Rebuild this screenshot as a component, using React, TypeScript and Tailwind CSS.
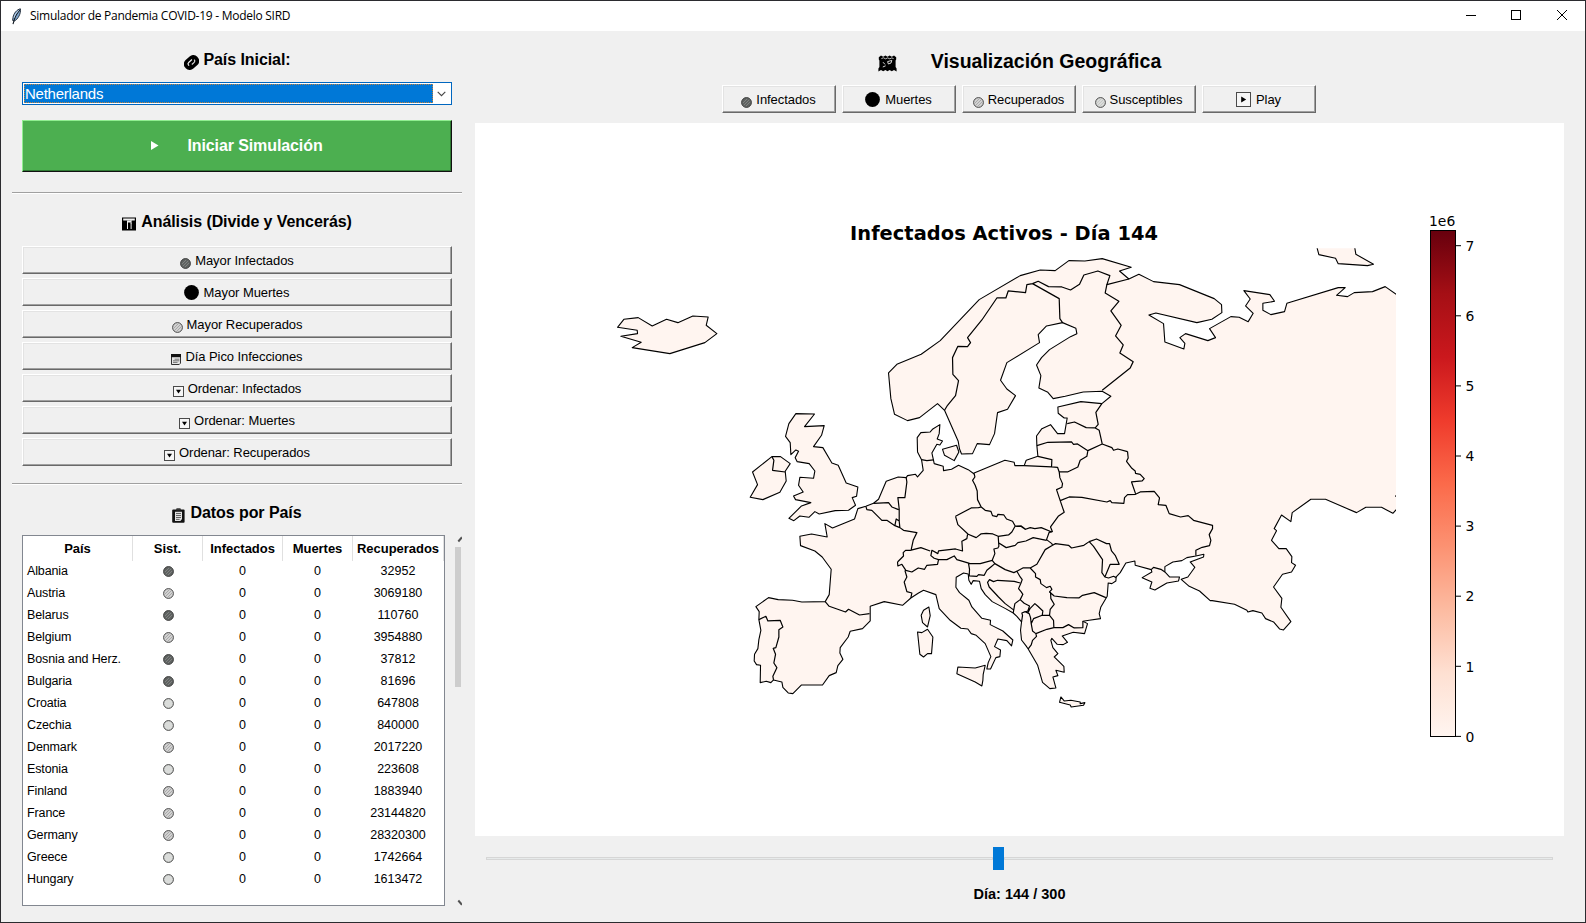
import React from "react";

type Pt = [number, number];

/* Survey sheets: each one stores points in thirds of a pixel from its own origin. */
const sheet = (ox: number, oy: number) => (s: string): Pt[] =>
  s.trim().split(/\s+/).map((p) => {
    const [x, y] = p.split(",").map(Number);
    return [ox + x / 3, oy + y / 3];
  });
const N = sheet(860, 230);
const E = sheet(1110, 230);
const W = sheet(730, 400);
const S = sheet(1000, 440);
const R = sheet(1120, 470);
const M = sheet(870, 540);
const I = sheet(600, 220);

const toPath = (pts: Pt[], close = false) =>
  "M" + pts.map((p) => p[0].toFixed(2) + " " + p[1].toFixed(2)).join("L") + (close ? "Z" : "");

const mainland: Pt[] = [
  ...N("253,540 232,520 178,562 142,571 103,552 92,505 85,428 110,402 183,372 240,331 357,208 480,136 540,119 585,121 626,91 674,92 726,85 813,111 778,122 806,146"),
  ...E("86,132 130,154 208,163 312,205 334,223 335,247 305,267 260,277 137,248 116,254 160,280 164,335 221,356 224,339 209,322 226,310 293,331 316,322 298,295 362,259 387,261 414,274 429,249 406,227 420,206 401,181 479,193 493,213 458,219 458,240 482,253 523,244 530,219 684,172 705,172 679,195 712,199 732,187 787,184 825,169 858,192 880,208"),
  ...R("850,90 828,118 818,129 784,111 737,111 709,127 616,87 572,87 516,127 512,154 484,134 462,175 469,181 454,210 476,235 498,235 515,259 514,277 526,285 514,305 487,312 460,350 485,384 482,411 512,454 490,479 478,476 460,455 436,445 425,428 398,421 383,425 380,420 343,402 276,391 270,391 238,362 207,348 183,327 203,320 224,291 210,275 250,260 251,252 227,257 200,262 185,271 158,275 134,289 134,305 148,320 178,320 175,332 140,338 104,359 89,354 95,335 66,322 95,305 93,298"),
  ...S("405,375 404,362 377,368 360,397 348,410 347,422 335,430 324,428 321,468 302,500 297,520 301,535 267,540 248,543 262,550 253,580 219,576 186,587 202,606 189,613 171,612 155,594 152,600 158,622 173,640 162,650 191,678 192,696 167,690 173,706 158,710 167,743 149,745 127,726 112,674 84,626 77,616 64,599 61,570 64,545 50,528 39,518"),
  ...M("406,205 366,184 345,163 333,145 328,123 309,121 303,132 296,120 294,101 280,98 258,111 257,141 268,157 296,180 305,200 335,234 361,240 360,253 398,272 428,299 424,317 410,301 383,296 373,319 391,329 389,349 377,352 361,386 350,386 354,367 362,349 345,310 318,285 303,280 293,266 272,264 240,240 207,205 197,163 160,150 145,158 122,173"),
  ...W("517,615 462,604 420,618 420,662 397,685 360,693 354,710 330,742 329,758 338,777 323,796 318,817 297,826 277,854 214,854 188,880 174,878 158,861 155,845 130,839 122,847 108,843 90,847 91,795 79,793 72,782 73,762 83,745 86,718 92,690 86,658 87,634 77,619 115,592 144,598 187,600 215,605 285,604 297,583 303,507 276,470 254,452 211,436 209,408 244,401 291,410 284,370 307,383 373,356 383,325 407,318 430,309 445,297 468,243 504,230 528,232 532,226 556,222 562,230 579,210 574,178 562,155 561,112 572,97 600,95 608,86 629,73 627,100 621,116 637,122 629,134 620,132 605,158 610,180 612,190 639,198 640,211 664,207 685,195 714,208 732,221"),
  ...N("340,729 434,690 462,696 464,706 492,706 498,690 533,678 530,646 529,617 545,595 571,583 592,610 613,610 621,563 612,563 594,549 593,530 662,514 725,520 752,498 726,483 669,485 615,498 579,505 563,486 536,473 542,436 529,404 544,382 568,358 631,319 650,310 647,294 607,277 559,287 534,313 538,337 440,397 421,450 440,476 466,496 442,537 412,547 403,610 388,643 351,640 337,670 304,671 298,656 294,633"),
];

const islands: Pt[][] = [
  N("247,657 289,645 296,665 282,691 253,675"),
  W("125,169 67,215 82,253 60,291 98,298 149,276 168,242 165,213 180,190 151,169"),
  W("197,40 253,41 223,79 282,76 274,105 250,139 278,142 305,188 324,195 348,248 383,260 379,288 366,292 376,315 355,330 315,331 267,341 254,334 236,351 209,347 191,361 176,354 214,317 242,307 196,298 190,287 219,275 205,255 209,231 250,234 254,212 237,190 201,184 195,172 205,153 197,149 182,163 180,127 166,108 176,70"),
  W("596,620 600,646 592,680 577,667 573,645 580,630"),
  W("562,695 575,697 592,687 608,710 604,760 592,760 580,770 569,762"),
  W("683,800 735,803 765,795 759,822 758,840 755,857 735,845 680,820"),
  S("182,770 192,782 212,780 240,785 240,790 254,787 250,795 213,800 210,794 178,786"),
  I("52,321 71,297 114,292 156,317 199,297 233,307 278,287 324,290 318,315 350,340 314,367 209,400 96,382 123,366 62,348 112,340 111,330"),
  E("620,30 621,54 626,73 676,84 684,100 772,106 790,102 737,72 734,54 733,30"),
];

const borders: Pt[][] = [
  N("253,540 262,525 286,496 295,451 278,432 277,382 293,348 322,349 331,337 322,322 365,269 410,203 437,203 444,182 496,187 500,163 517,160 534,153 565,169 605,170 631,179 658,162 671,134 713,122 749,136 740,163 806,146"),
  N("517,160 597,205 599,265 607,277"),
  N("740,163 735,188 776,213 752,242 783,285 766,317 789,344 779,368 819,394 810,413 726,480"),
  N("725,520 707,546 714,582 705,593"),
  N("621,580 643,575 678,592 705,593 717,600 726,641"),
  N("530,646 563,636 634,635 640,642 652,641 683,661 726,641"),
  N("683,661 680,678 660,690 653,710 622,725 597,725 592,711 574,710"),
  N("533,678 575,688 574,710 492,706"),
  N("726,641 755,652 760,660 773,656 802,664"),
  S("382,34 384,53 379,63 395,84 405,92 406,99 420,102 432,115 426,122 394,125 406,160"),
  S("180,181 207,170 245,171 320,185 330,181 335,187 371,189 373,172 382,163 406,162 420,155 462,153 478,173 474,193 497,195 507,220 541,230 564,226 580,240 637,255 637,265 627,283 632,300 628,316 606,321 587,330 587,346"),
  S("177,95 179,112 187,130 185,141 169,148 180,181 192,216 174,228 151,260 157,275"),
  S("47,258 63,257 76,267 90,262 104,265 123,262 155,275 147,276 139,298 155,310 157,315"),
  S("-4,308 18,322 45,315 53,307 77,302 99,292 139,300"),
  S("157,315 166,310 205,315 214,323 251,315 267,304 289,296 319,310 328,310 334,332 345,345 357,372 330,372 314,410 325,413 340,408 348,412"),
  S("267,304 280,318 307,358 305,397 314,410"),
  S("157,315 135,328 110,372 90,383 68,383 50,393"),
  S("90,383 106,400 106,410 120,418 122,430 139,442 150,438 155,447 148,455 162,467 200,472 236,473 247,465 282,457 317,472"),
  S("151,455 152,475 162,492 150,507 148,525 160,540 161,562 188,562 205,553 222,563 248,562 248,543"),
  S("161,562 140,567 107,580 109,588 97,600 93,614 84,626"),
  S("148,525 126,525 100,535 93,550 97,572 107,580"),
  S("64,545 67,525 65,518 75,514 87,520 91,532 93,550"),
  S("84,516 90,504 104,490 113,498 128,512 126,525"),
  S("39,518 44,490 60,478 72,489 88,497 83,512 75,515"),
  S("60,478 68,462 63,455 55,445 62,429 66,418 60,410 50,393"),
  M("450,128 432,123 382,120 370,124 358,118 352,126 357,140 385,170 405,190 429,208"),
  M("295,70 298,87 297,107 320,108 325,103 342,105 350,90 362,80 374,70 366,60 330,70 295,70"),
  M("374,70 405,88 431,97 441,92"),
  W("804,408 806,438 803,443 791,446 794,460 786,480"),
  W("676,348 723,323 745,322 753,320 765,330 782,333 787,346 800,349 803,342 821,344 829,356 847,363 855,377 845,395 835,404 804,408 788,401 768,399 752,401 738,412 714,402 683,373 676,348"),
  W("855,377 872,378 886,388"),
  W("732,221 734,230 727,240 735,255 741,272 742,298 753,320"),
  W("712,403 710,415 695,423 697,452 676,446 625,452 623,460 605,450 602,466 612,474 625,478 650,478 672,467 680,478 718,489"),
  W("502,485 520,467 519,457 526,450 540,450 572,442 600,452"),
  W("625,478 622,492 590,495 583,507 564,503 545,515 527,510 515,492 503,497 502,485"),
  W("524,510 530,530 522,545 530,574 545,578 542,593"),
  W("543,448 549,420 560,397 520,390 509,382 507,362 498,356 494,376 509,382"),
  W("507,362 507,326 503,292 524,292 530,245 528,232"),
  W("430,309 475,307 485,320 505,328"),
  W("407,318 410,328 425,330 455,360 470,360 494,376"),
  W("285,604 297,618 346,635 355,627 388,644 418,640"),
  W("86,658 107,648 113,662 150,660 158,680 146,688 146,710 137,742 129,744 136,762 131,788 140,802 128,828 130,839"),
  W("574,178 590,181 610,179"),
  W("125,169 131,180 127,210 165,215"),
  R("93,298 100,291 122,297 134,305"),
  R("825,76 828,79"),
];

/* ---------- small glyphs ---------- */

function Disc({ tone, className = "" }: { tone: string; className?: string }) {
  const light = tone === "plain" || tone === "pale";
  const fill = tone === "dark" ? "#5f6361" : light ? "#dadcda" : "#d2d2d2";
  return (
    <svg width="11" height="11" viewBox="0 0 11 11" className={"shrink-0 " + className}>
      <circle cx="5.5" cy="5.5" r="4.9" fill={fill} stroke={tone === "dark" ? "#3c3c3c" : "#484848"} strokeWidth="1" />
      {tone !== "plain" && (
        <path
          d="M1.8 6.2L6.2 1.8M2.6 8.4L8.4 2.6M4.8 9.2L9.2 4.8"
          stroke={tone === "dark" ? "#8f8f8f" : tone === "pale" ? "#bdbdbd" : "#959595"}
          strokeWidth="0.7"
        />
      )}
    </svg>
  );
}

const BigDot = () => (
  <svg width="15" height="16" viewBox="0 0 15 16" className="relative left-[-0.5px] shrink-0">
    <circle cx="7.5" cy="7.5" r="7.4" fill="#000" />
  </svg>
);

const BoxTri = ({ dir }: { dir: "down" | "right" }) => {
  const s = dir === "down" ? 11 : 15;
  return (
    <svg width={s} height={s} viewBox={`0 0 ${s} ${s}`} className={dir === "down" ? "relative top-[3px] shrink-0" : "shrink-0"}>
      <rect x="0.5" y="0.5" width={s - 1} height={s - 1} fill="#f6f6f6" stroke="#4a4a4a" />
      <path d={dir === "down" ? "M3 3.8H8L5.5 7.6Z" : "M5.2 4.5V10.5L10.2 7.5Z"} fill="#000" />
    </svg>
  );
};

const CalendarGlyph = () => (
  <svg width="10" height="11" viewBox="0 0 10 11" className="relative top-[3px] shrink-0">
    <path d="M.5 .5H9.5V9.2L8.2 10.5H.5Z" fill="#e6e6e6" stroke="#333" />
    <rect x="0" y="0" width="10" height="3.2" fill="#111" />
    <path d="M3.6 5.2H8.4M2 6.8H8.4M2 8.4H6.5" stroke="#777" strokeWidth="1" />
  </svg>
);

const PillGlyph = () => (
  <svg width="15" height="15" viewBox="0 0 15 15" className="relative top-[2px] left-[1px] shrink-0">
    <g transform="rotate(-42 7.5 7.5)">
      <rect x="-0.6" y="1.7" width="16.2" height="11.6" rx="5.4" fill="#000" />
      <path d="M3.6 8.2V7.4Q3.6 5.6 5.4 5.6H9.8" fill="none" stroke="#efefef" strokeWidth="1.2" />
      <path d="M6.4 9.2H9.6Q11.4 9.2 11.4 7.2" fill="none" stroke="#d8d8d8" strokeWidth="1.2" />
    </g>
  </svg>
);

const ChartGlyph = () => (
  <svg width="14" height="14" viewBox="0 0 14 14" className="relative top-[2px] shrink-0">
    <rect x="0" y="0.5" width="14" height="13" fill="#000" />
    <path d="M1.2 1.6H12.8V3.6H9.6V6.4H8.6V3.6H1.2Z" fill="#f0f0f0" />
    <path d="M5 3.6H6V12H5ZM8.6 6H9.6V12H8.6ZM5.6 3.6H9V5.6H5.6Z" fill="#f0f0f0" />
  </svg>
);

const ClipboardGlyph = () => (
  <svg width="13" height="15" viewBox="0 0 13 15" className="relative top-[2px] shrink-0">
    <rect x="0.2" y="1.5" width="12.4" height="13.2" rx="1" fill="#111" />
    <path d="M4.2 2.6V1.2Q4.2 .3 5 .3H8Q8.8 .3 8.8 1.2V2.6Z" fill="#333" />
    <path d="M3 3.8H10V11L8.4 13H3Z" fill="#e2e2e2" />
    <path d="M4 5.5H9M4 7.5H9M4 9.5H9M4 11.4H7.6" stroke="#444" strokeWidth="0.8" />
  </svg>
);

const MapGlyph = () => (
  <svg width="19" height="17" viewBox="0 0 19 17" className="relative top-[2px] shrink-0">
    <path
      d="M.8 2.2L3 .6L5.2 1.8L7.4 .6L9.5 1.8L11.6 .6L13.8 1.8L16 .6L18.2 2.2V4.4L17.6 5.4V12L18.6 13.6V16.4L16 15L13.8 16.2L11.6 15L9.5 16.2L7.4 15L5.2 16.2L3 15L.4 16.4V13.6L1.4 12V5.4L.8 4.4Z"
      fill="#000"
    />
    <path d="M3.4 3.6L5.4 2.8L7.6 3.8L9.6 2.9L11.8 3.8L13.8 2.9L15.6 3.6" fill="none" stroke="#efefef" strokeWidth="0.8" />
    <path d="M9.6 6.6L13.8 5.4L13 8L10.4 9ZM5 7.2L7 9.4M4.8 12L7.6 10.8" fill="none" stroke="#efefef" strokeWidth="0.9" />
  </svg>
);

const Feather = () => (
  <svg width="11" height="17" viewBox="0 0 11 17">
    <path d="M9.4 .8C6 1.4 2.6 5.4 2 9.4L1.6 12.4L3.4 13C6.8 11.4 10.2 5.6 9.4 .8Z" fill="#7fa5cc" stroke="#1a2430" strokeWidth="0.9" />
    <path d="M8.8 2C6.4 5 4.2 8.4 3.4 11.4L2 16.2" fill="none" stroke="#101820" strokeWidth="1.1" />
    <path d="M7.8 2.4C5.4 4.4 3.8 6.8 3.2 9.6" fill="none" stroke="#d6e5f5" strokeWidth="0.8" />
  </svg>
);

/* ---------- widgets ---------- */

function RaisedButton({ children, className = "" }: { children: React.ReactNode; className?: string }) {
  return (
    <button
      type="button"
      className={
        "flex h-7 items-center justify-center border border-t-white border-l-white border-r-[#696969] border-b-[#696969] bg-[#f0f0f0] pt-[1px] text-[13px] tracking-[-0.07px] shadow-[inset_-1px_-1px_0_#a0a0a0,inset_1px_1px_0_#e3e3e3] " +
        className
      }
    >
      {children}
    </button>
  );
}

const Heading = ({ children, className = "" }: { children: React.ReactNode; className?: string }) => (
  <h2 className={"flex items-center justify-center gap-[5px] text-[16px] leading-5 font-bold tracking-[-0.07px] " + className}>
    {children}
  </h2>
);

const Rule = () => <div className="mx-[11px] h-[2px] border-t border-t-[#a0a0a0] bg-white" />;

const rows: [string, string, string][] = [
  ["Albania", "dark", "32952"],
  ["Austria", "mid", "3069180"],
  ["Belarus", "dark", "110760"],
  ["Belgium", "mid", "3954880"],
  ["Bosnia and Herz.", "dark", "37812"],
  ["Bulgaria", "dark", "81696"],
  ["Croatia", "plain", "647808"],
  ["Czechia", "plain", "840000"],
  ["Denmark", "mid", "2017220"],
  ["Estonia", "plain", "223608"],
  ["Finland", "mid", "1883940"],
  ["France", "mid", "23144820"],
  ["Germany", "mid", "28320300"],
  ["Greece", "plain", "1742664"],
  ["Hungary", "plain", "1613472"],
];

const analysis: [React.ReactNode, string][] = [
  [<Disc tone="dark" className="relative top-[3px]" />, "Mayor Infectados"],
  [<BigDot />, "Mayor Muertes"],
  [<Disc tone="mid" className="relative top-[3px]" />, "Mayor Recuperados"],
  [<CalendarGlyph />, "Día Pico Infecciones"],
  [<BoxTri dir="down" />, "Ordenar: Infectados"],
  [<BoxTri dir="down" />, "Ordenar: Muertes"],
  [<BoxTri dir="down" />, "Ordenar: Recuperados"],
];

function LeftPanel() {
  return (
    <aside className="flex w-[472px] shrink-0 flex-col">
      <Heading className="mt-[19px]">
        <PillGlyph />
        <span>País Inicial:</span>
      </Heading>
      <div className="mx-[21px] mt-[12px] flex h-[23px] w-[430px] border border-[#0067c0] bg-white p-px">
        <div className="flex flex-1 items-center border border-dotted border-[#c08040] bg-[#0078d7] pt-[1px] text-[15px] tracking-[-0.25px] text-white">
          Netherlands
        </div>
        <div className="flex w-[17px] items-center justify-center">
          <svg width="9" height="6" viewBox="0 0 9 6">
            <path d="M.7 .8L4.5 4.6L8.3 .8" fill="none" stroke="#444" strokeWidth="1.1" />
          </svg>
        </div>
      </div>
      <button
        type="button"
        className="mx-[21px] mt-[15px] flex h-[52px] w-[430px] items-center justify-center gap-[28px] border border-t-[#90ee90] border-l-[#90ee90] border-r-[#111] border-b-[#111] bg-[#4caf50] text-[16px] font-bold tracking-[-0.1px] text-white shadow-[inset_-1px_-1px_0_#2f7a33]"
      >
        <svg width="8" height="9" viewBox="0 0 8 9" className="relative top-[-1px]">
          <path d="M0 0L7.5 4.5L0 9Z" fill="#fff" />
        </svg>
        <span>Iniciar Simulación</span>
      </button>
      <div className="mt-5">
        <Rule />
      </div>
      <Heading className="mt-[18px]">
        <ChartGlyph />
        <span>Análisis (Divide y Vencerás)</span>
      </Heading>
      <div className="mx-[21px] mt-[14px] flex w-[430px] flex-col gap-1">
        {analysis.map(([icon, label]) => (
          <RaisedButton key={label} className="gap-1">
            {icon}
            <span>{label}</span>
          </RaisedButton>
        ))}
      </div>
      <div className="mt-[17px]">
        <Rule />
      </div>
      <Heading className="mt-[18px]">
        <ClipboardGlyph />
        <span>Datos por País</span>
      </Heading>
      <div className="mx-[21px] mt-[12px] flex">
        <div className="h-[371px] w-[423px] border border-[#828790] bg-white">
          <div className="grid h-[25px] grid-cols-[110px_70px_80px_70px_91px] text-center text-[13px] leading-[25px] font-bold">
            {["País", "Sist.", "Infectados", "Muertes", "Recuperados"].map((h) => (
              <div key={h} className="border-r border-[#e0e0e0] tracking-[-0.03px] whitespace-nowrap">
                {h}
              </div>
            ))}
          </div>
          {rows.map(([name, tone, rec]) => (
            <div key={name} className="grid h-[22px] grid-cols-[110px_70px_80px_70px_90px] text-center text-[12.5px] leading-[21px]">
              <div className="pl-1 text-left tracking-[-0.12px] whitespace-nowrap">{name}</div>
              <div className="flex items-center justify-center pb-[1px]">
                <Disc tone={tone} />
              </div>
              <div className="pr-px">0</div>
              <div className="pr-px">0</div>
              <div>{rec}</div>
            </div>
          ))}
        </div>
        <div className="ml-[10px] flex h-[371px] w-[7px] flex-col">
          <svg width="7" height="12" viewBox="0 0 7 12">
            <path d="M3.3 6.5L7 2.2" stroke="#505050" strokeWidth="2" />
          </svg>
          <div className="h-[140px] w-[6px] bg-[#cdcdcd]" />
          <div className="flex-1" />
          <svg width="7" height="8" viewBox="0 0 7 8">
            <path d="M3.3 2.5L7 6.8" stroke="#505050" strokeWidth="2" />
          </svg>
        </div>
      </div>
    </aside>
  );
}

function MapFigure() {
  const ticks = [0, 1, 2, 3, 4, 5, 6, 7];
  return (
    <svg width="1089" height="713" viewBox="475 123 1089 713" className="block bg-white">
      <defs>
        <clipPath id="axes">
          <rect x="600" y="248" width="795.8" height="480" />
        </clipPath>
        <linearGradient id="reds" x1="0" y1="1" x2="0" y2="0">
          <stop offset="0" stopColor="#fff5f0" />
          <stop offset="0.125" stopColor="#fee0d2" />
          <stop offset="0.25" stopColor="#fcbba1" />
          <stop offset="0.375" stopColor="#fc9272" />
          <stop offset="0.5" stopColor="#fb6a4a" />
          <stop offset="0.625" stopColor="#ef3b2c" />
          <stop offset="0.75" stopColor="#cb181d" />
          <stop offset="0.875" stopColor="#a50f15" />
          <stop offset="1" stopColor="#67000d" />
        </linearGradient>
      </defs>
      <text x="1004" y="239.5" textAnchor="middle" textLength="308" fontSize="19.4" fontWeight="700" fontFamily="DejaVu Sans, sans-serif">
        Infectados Activos - Día 144
      </text>
      <g transform="translate(0.2 0.3)" clipPath="url(#axes)" stroke="#000" strokeWidth="1.1" strokeLinejoin="round">
        <path d={toPath(mainland, true)} fill="#fff5f0" />
        {islands.map((p, i) => (
          <path key={i} d={toPath(p, true)} fill="#fff5f0" />
        ))}
        <path d={borders.map((b) => toPath(b)).join("")} fill="none" strokeWidth="1.2" />
      </g>
      <rect x="1430.5" y="230.5" width="25" height="506" fill="url(#reds)" stroke="#000" />
      <g fontSize="13.9" fontFamily="DejaVu Sans, sans-serif">
        <text x="1429" y="226">1e6</text>
        {ticks.map((t) => (
          <g key={t}>
            <path d={`M1456 ${736.4 - t * 70.1}h5`} stroke="#000" />
            <text x="1465.5" y={741.6 - t * 70.1}>{t}</text>
          </g>
        ))}
      </g>
    </svg>
  );
}

function RightPanel() {
  return (
    <main className="flex flex-1 flex-col">
      <div className="flex h-[54px] w-[1091px] items-center justify-center gap-[34px] pt-[6px] pl-[2px]">
        <MapGlyph />
        <h1 className="text-[19.5px] leading-6 font-bold">Visualización Geográfica</h1>
      </div>
      <div className="flex w-[1091px] justify-center gap-[6px]">
        <RaisedButton className="w-[114px] gap-1">
          <Disc tone="dark" className="relative top-[3px]" />
          <span>Infectados</span>
        </RaisedButton>
        <RaisedButton className="w-[114px] gap-[5px]">
          <BigDot />
          <span>Muertes</span>
        </RaisedButton>
        <RaisedButton className="w-[114px] gap-1">
          <Disc tone="mid" className="relative top-[3px]" />
          <span>Recuperados</span>
        </RaisedButton>
        <RaisedButton className="w-[114px] gap-1">
          <Disc tone="pale" className="relative top-[3px]" />
          <span>Susceptibles</span>
        </RaisedButton>
        <RaisedButton className="w-[114px] gap-[5px]">
          <BoxTri dir="right" />
          <span>Play</span>
        </RaisedButton>
      </div>
      <div className="mt-[10px] ml-[2px]">
        <MapFigure />
      </div>
      <div className="mt-[11px] ml-[13px] flex h-[23px] w-[1067px] items-center">
        <div className="h-[3px] w-[507px] border border-[#d6d6d6] bg-[#e7eaea]" />
        <div className="h-[23px] w-[11px] bg-[#0078d7]" />
        <div className="h-[3px] flex-1 border border-[#d6d6d6] bg-[#e7eaea]" />
      </div>
      <div className="mt-[14px] w-[1093px] text-center text-[14.5px] leading-5 font-bold">Día: 144 / 300</div>
    </main>
  );
}

export default function App() {
  return (
    <div className="flex h-[923px] w-[1586px] flex-col overflow-hidden border border-[#2b2b2f] bg-[#f0f0f0] font-['Liberation_Sans',Arial,sans-serif] text-black">
      <header className="flex h-[30px] shrink-0 items-center bg-white pl-[10px]">
        <Feather />
        <span className="ml-[8px] flex-1 font-['Open_Sans','Noto_Sans',sans-serif] text-[12px] tracking-[-0.27px]">
          Simulador de Pandemia COVID-19 - Modelo SIRD
        </span>
        <svg width="120" height="12" viewBox="1465 10 120 12" fill="none" stroke="#000">
          <path d="M1466 15.5H1476" />
          <rect x="1511.5" y="10.5" width="9" height="9" />
          <path d="M1557 10L1567 20M1567 10L1557 20" />
        </svg>
      </header>
      <div className="flex flex-1">
        <LeftPanel />
        <RightPanel />
      </div>
    </div>
  );
}
